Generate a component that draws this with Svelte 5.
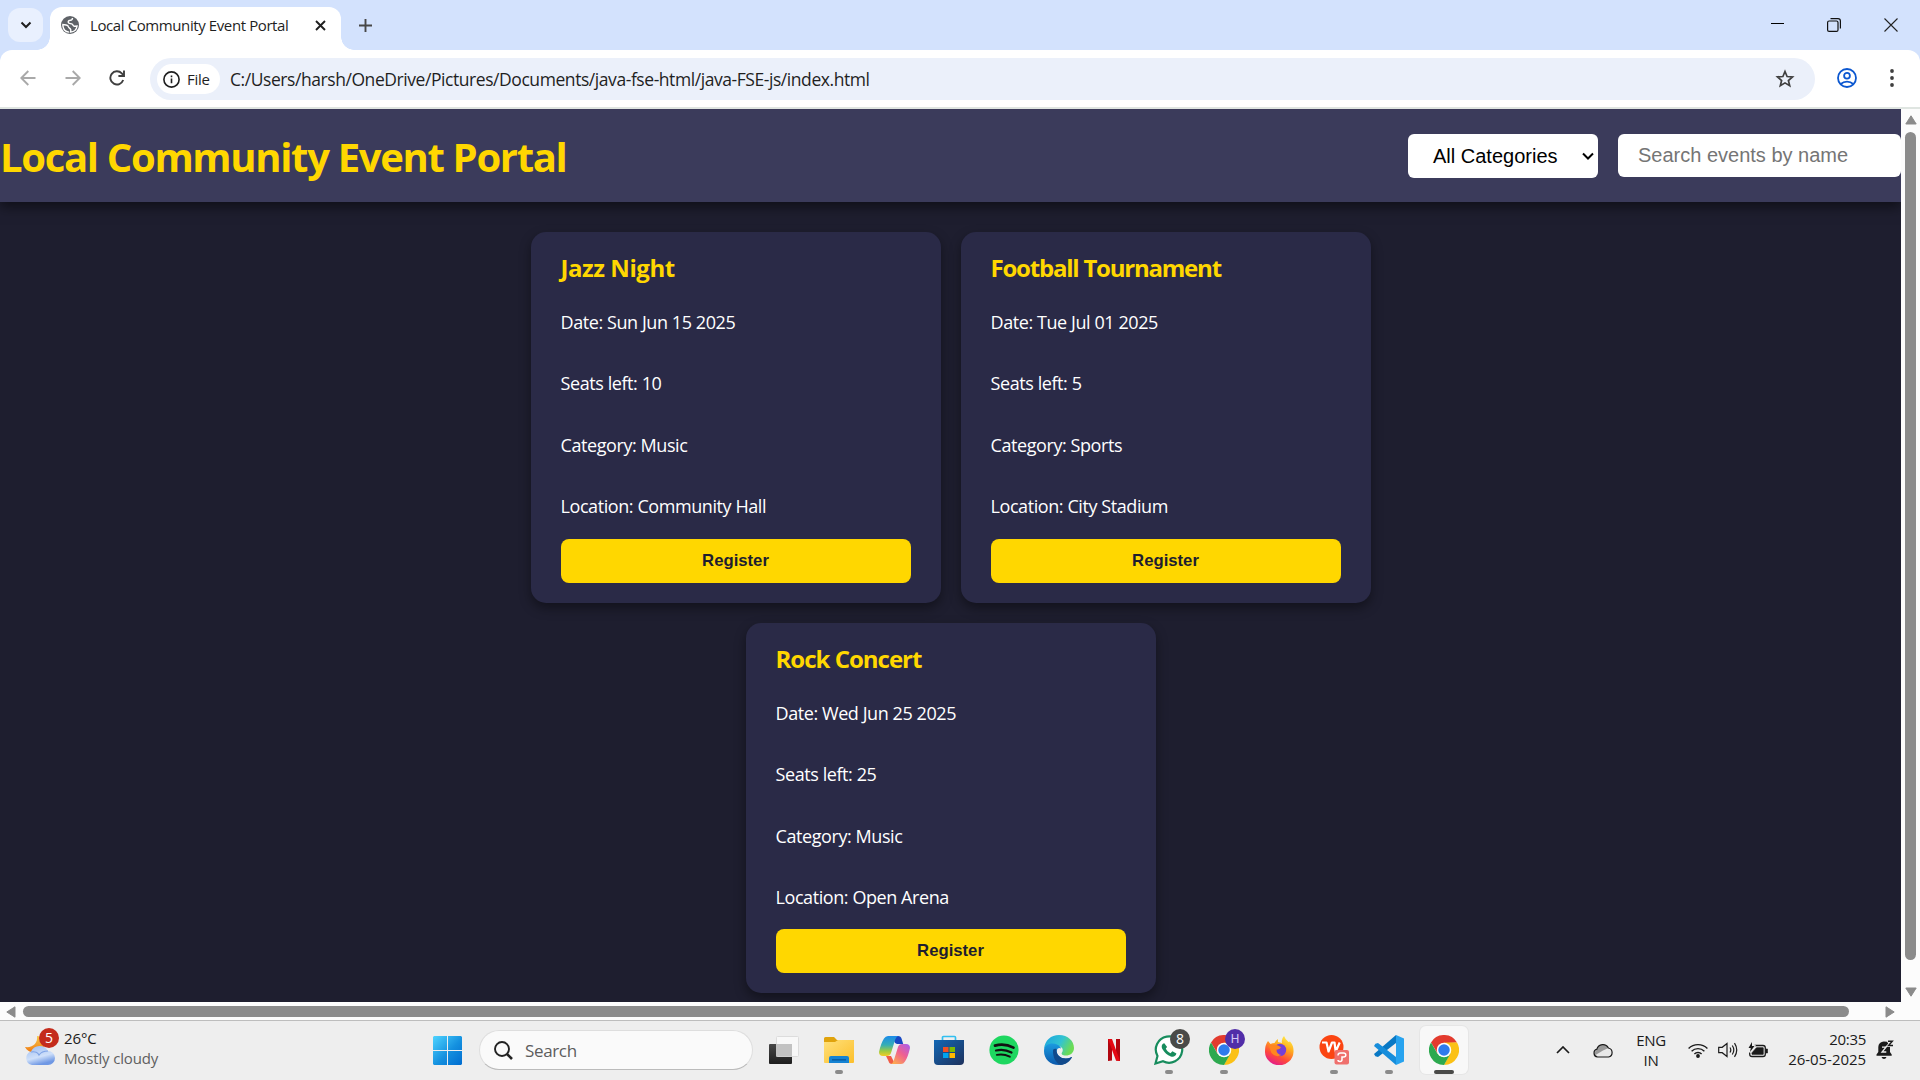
<script>
  const events = [
    { name: 'Jazz Night', date: 'Sun Jun 15 2025', seats: 10, category: 'Music', location: 'Community Hall', tracking: -0.45 },
    { name: 'Football Tournament', date: 'Tue Jul 01 2025', seats: 5, category: 'Sports', location: 'City Stadium', tracking: -1.22 },
    { name: 'Rock Concert', date: 'Wed Jun 25 2025', seats: 25, category: 'Music', location: 'Open Arena', tracking: -1.0 }
  ];
</script>

{#snippet chrome()}
  <svg width="30" height="30" viewBox="0 0 48 48">
    <path fill="#e33b2e" d="M3.2 12A24 24 0 0 1 44.8 12L24 13 14 30z" />
    <path fill="#fbc116" d="M44.8 12A24 24 0 0 1 24 48L33.5 29.5 24 12z" />
    <path fill="#2da94f" d="M3.2 12A24 24 0 0 0 24 48l10.4-18.3L24 35l-10.4-5z" />
    <circle cx="24" cy="24" r="11.6" fill="#fff" />
    <circle cx="24" cy="24" r="9.2" fill="#2f7bed" />
  </svg>
{/snippet}

<div class="screen">
  <div class="tabs">
    <button class="tab-search" aria-label="Search tabs">
      <svg width="12" height="8" viewBox="0 0 12 8"><path d="M1.5 1.5 6 6l4.500-4.500" fill="none" stroke="#1f1f1f" stroke-width="2" /></svg>
    </button>
    <div class="tab">
      <svg class="globe" width="18" height="18" viewBox="0 0 18 18">
        <circle cx="9" cy="9" r="9" fill="#5f6368" />
        <path d="M11.200 2c.2 1.600-.6 2-2 2.300-1.500.3-1.400 1-1.300 1.900.2 1.300 1.400 1.300 2.800 1.400 1.500.2 1.400 1.700 2.700 2l2.600.2c-.5 2.800-2.600 5.300-5.600 6l-2.600.1c0-1.200.7-1.400.6-2.500-.1-1.400-1.300-1.300-1.700-2.500-.4-1.300-1.300-1.700-2.700-1.900L1.900 8.700A7.200 7.200 0 0 1 6.500 2.300z" fill="none" />
        <path d="M11.500 1.900c0 1.700-.9 2.200-2.200 2.400-1.600.2-2.400 1-2 2.200.4 1.300 2 .9 3.400 1.300 1.400.5 1.200 2.200 2.700 2.500l2.700-.3a7.200 7.200 0 0 1-6.600 6.100c.3-1.400.7-2-.1-3.100-.7-1-1.700-1.100-2-2.300-.2-1-1-1.500-2.200-1.700L1.900 8.500v1.300A7.200 7.200 0 0 0 8 16.100" fill="none" stroke="#fff" stroke-width="1.400" />
      </svg>
      <span class="tab-title">Local Community Event Portal</span>
      <svg class="tab-close" width="11" height="11" viewBox="0 0 11 11"><path d="m1 1 9 9m0-9-9 9" stroke="#1f1f1f" stroke-width="1.900" /></svg>
    </div>
    <svg class="new-tab" width="13" height="13" viewBox="0 0 13 13"><path d="M6.500 0v13M0 6.500h13" stroke="#474747" stroke-width="1.900" /></svg>
    <div class="window-buttons">
      <svg width="13" height="13" viewBox="0 0 13 13"><path d="M0 5.500h13" stroke="#000" /></svg>
      <svg width="14" height="14" viewBox="0 0 14 14" fill="none" stroke="#111" stroke-width="1.200"><rect x=".6" y="3" width="10.400" height="10.400" rx="1.500" /><path d="M3.500.6h7.500a2.400 2.400 0 0 1 2.400 2.400v7.500" /></svg>
      <svg width="14" height="14" viewBox="0 0 14 14"><path d="m.5.5 13 13m0-13-13 13" stroke="#222" stroke-width="1.100" /></svg>
    </div>
  </div>

  <div class="toolbar">
    <div class="nav">
      <svg width="16" height="16" viewBox="0 0 16 16" fill="none" stroke="#a9a9a9" stroke-width="1.900"><path d="M15.500 8H1.500M8.300 1 1.300 8l7 7" /></svg>
      <svg width="16" height="16" viewBox="0 0 16 16" fill="none" stroke="#a9a9a9" stroke-width="1.900"><path d="M.5 8h14M7.700 1l7 7-7 7" /></svg>
      <svg width="16" height="16" viewBox="0 0 16 16" fill="none" stroke="#3f3f3f" stroke-width="1.900"><path d="M14.200 10A6.600 6.600 0 1 1 12.800 3.400L14.600 5.500M15 .4V6H9.400" /></svg>
    </div>
    <div class="omnibox">
      <div class="chip">
        <svg width="17" height="17" viewBox="0 0 17 17" fill="none" stroke="#1f1f1f" stroke-width="1.600"><circle cx="8.500" cy="8.500" r="7.600" /><path d="M8.500 7.600v4.700M8.500 4.500v1.700" /></svg>
        <span>File</span>
      </div>
      <span class="url">C:/Users/harsh/OneDrive/Pictures/Documents/java-fse-html/java-FSE-js/index.html</span>
      <svg class="star" width="20" height="20" viewBox="0 0 20 20"><path d="m10 2.500 2.100 5 5.400.4-4.100 3.600 1.300 5.300-4.700-2.900-4.700 2.900 1.300-5.300L2.500 7.900l5.400-.4z" fill="none" stroke="#3f3f3f" stroke-width="1.700" /></svg>
    </div>
    <svg class="profile" width="20" height="20" viewBox="0 0 20 20" fill="none" stroke="#0b57d0" stroke-width="1.800"><circle cx="10" cy="10" r="9" /><circle cx="10" cy="7.800" r="2.900" /><path d="M3.800 16c3.400-3.200 9-3.200 12.400 0" /></svg>
    <svg class="kebab" width="4" height="18" viewBox="0 0 4 18" fill="#3f3f3f"><circle cx="2" cy="2" r="1.900" /><circle cx="2" cy="9" r="1.900" /><circle cx="2" cy="16" r="1.900" /></svg>
  </div>

  <div class="viewport">
    <div class="page">
      <header>
        <h1>Local Community Event Portal</h1>
        <div class="filters">
          <div class="select">
            <span>All Categories</span>
            <svg width="12" height="8" viewBox="0 0 12 8"><path d="m1 1.500 5 5 5-5" fill="none" stroke="#000" stroke-width="2" /></svg>
          </div>
          <input type="text" placeholder="Search events by name" />
        </div>
      </header>
      <main>
        {#each events as event}
          <article>
            <h2 style:letter-spacing="{event.tracking}px">{event.name}</h2>
            <p>Date: {event.date}</p>
            <p>Seats left: {event.seats}</p>
            <p>Category: {event.category}</p>
            <p>Location: {event.location}</p>
            <button class="register">Register</button>
          </article>
        {/each}
      </main>
    </div>
    <div class="vscroll">
      <svg width="12" height="10" viewBox="0 0 12 10"><path d="M6 .8 11.200 9H.8z" fill="#8b8b8b" stroke="#8b8b8b" stroke-linejoin="round" /></svg>
      <div class="vthumb"></div>
      <svg width="12" height="10" viewBox="0 0 12 10"><path d="M6 9.200.8 1h10.400z" fill="#8b8b8b" stroke="#8b8b8b" stroke-linejoin="round" /></svg>
    </div>
  </div>

  <div class="hscroll">
    <svg width="10" height="12" viewBox="0 0 10 12"><path d="M.8 6 9 .8v10.400z" fill="#8b8b8b" stroke="#8b8b8b" stroke-linejoin="round" /></svg>
    <div class="hthumb"></div>
    <svg width="10" height="12" viewBox="0 0 10 12"><path d="M9.200 6 1 .8v10.400z" fill="#8b8b8b" stroke="#8b8b8b" stroke-linejoin="round" /></svg>
  </div>

  <footer>
    <div class="weather">
      <div class="weather-icon">
        <svg width="30" height="36" viewBox="0 0 30 36">
          <defs>
            <linearGradient id="moon" x2="0" y2="1"><stop stop-color="#f7c84a" /><stop offset="1" stop-color="#f07a12" /></linearGradient>
            <linearGradient id="cloud" x2=".4" y2="1"><stop stop-color="#9dbcf0" /><stop offset=".65" stop-color="#cfe0fa" /><stop offset="1" stop-color="#6f98e4" /></linearGradient>
          </defs>
          <path d="M12 7c1 7-4 12-12 11 2 4 6 6 10 5l9-5V8z" fill="url(#moon)" />
          <path d="M7 36a7 7 0 0 1-1-13.500 9.500 9.500 0 0 1 17-.5A7 7 0 0 1 23 36z" fill="url(#cloud)" />
          <path d="M6 23c4-1 7 1 8 3 2-3 5-4 9-4" fill="none" stroke="#7fa3e6" stroke-width="1.200" />
        </svg>
        <span class="badge red">5</span>
      </div>
      <div class="weather-text"><span>26°C</span><span class="muted">Mostly cloudy</span></div>
    </div>

    <svg class="start" width="29" height="29" viewBox="0 0 29 29">
      <defs><linearGradient id="win" x2="1" y2="1"><stop stop-color="#4fd4ff" /><stop offset=".55" stop-color="#1490df" /><stop offset="1" stop-color="#006cd0" /></linearGradient></defs>
      <path d="M1 0h13v14H0V1zM15 0h13l1 1v13H15zM0 15h14v14H1l-1-1zM15 15h14v13l-1 1H15z" fill="url(#win)" />
    </svg>
    <div class="search">
      <svg width="19" height="19" viewBox="0 0 19 19" fill="none" stroke="#222"><circle cx="8" cy="8" r="7" stroke-width="1.900" /><path d="m13 13 5 5" stroke-width="2.600" /></svg>
      <span>Search</span>
    </div>

    <div class="apps">
      <div class="app">
        <svg width="30" height="28" viewBox="0 0 30 28"><defs><linearGradient id="tv" x2="0" y2="1"><stop stop-color="#474747" /><stop offset="1" stop-color="#1d1d1d" /></linearGradient></defs><rect y="8" width="23" height="20" rx="1" fill="url(#tv)" /><rect x="7.500" y=".5" width="22" height="20" rx="1" fill="#f8f8f8" stroke="#dcdcdc" /><rect x="7" y="8" width="16" height="12.500" fill="#c2c2c2" /></svg>
      </div>
      <div class="app running">
        <svg width="30" height="28" viewBox="0 0 30 28"><defs><linearGradient id="fold" x2="1" y2="1"><stop stop-color="#ffe07a" /><stop offset="1" stop-color="#fcbf2b" /></linearGradient></defs><path d="M0 2.500Q0 1 1.500 1H10l3 3h16q1 0 1 1v8H0z" fill="#e0a30c" /><path d="M0 6h11l3-2h15q1 0 1 1v21q0 1-1 1H1q-1 0-1-1z" fill="url(#fold)" /><path d="M5 27v-5q0-2 2-2h16q2 0 2 2v5z" fill="#1683d3" /><path d="M8 23.800h14" stroke="#0a5ca3" stroke-width="1.500" /></svg>
      </div>
      <div class="app">
        <svg width="31" height="28" viewBox="0 0 31 28">
          <defs>
            <linearGradient id="c1" x2="0" y2="1"><stop stop-color="#1b8bea" /><stop offset=".45" stop-color="#35aeb5" /><stop offset=".75" stop-color="#9ccb42" /><stop offset="1" stop-color="#f3cd26" /></linearGradient>
            <linearGradient id="c2" x1="1" x2=".2" y2="1"><stop stop-color="#a45df3" /><stop offset=".5" stop-color="#ef5f91" /><stop offset="1" stop-color="#fdaa50" /></linearGradient>
          </defs>
          <path d="M15 0h4q3 0 3.700 3l1.500 5H18q-2 0-3-3z" fill="#1748c4" />
          <path d="M9 0h10q-2 1-2.800 3.500L12 17q-1 3-4 3H4q-4 0-4-4Q2 7 5 2.500 6.500 0 9 0z" fill="url(#c1)" />
          <path d="M7 20h5l4 8h-3q-3 0-3.500-3z" fill="#f05b45" />
          <path d="M22 28H12q2-1 2.800-3.500L19 11q1-3 4-3h4q4 0 4 4-2 9-5 13.500-1.500 2.500-4 2.500z" fill="url(#c2)" />
        </svg>
      </div>
      <div class="app">
        <svg width="30" height="30" viewBox="0 0 30 30"><defs><linearGradient id="st" x2="1" y2="1"><stop stop-color="#1267b5" /><stop offset="1" stop-color="#1e315c" /></linearGradient></defs><path d="M8.500 6V2.500q0-1 1-1h11q1 0 1 1V6" fill="none" stroke="#31bff0" stroke-width="1.700" /><path d="M0 5h30v21q0 4-4 4H4q-4 0-4-4z" fill="url(#st)" /><path fill="#f25022" d="M9 12h5.500v5H9z" /><path fill="#7fba00" d="M15.500 12H21v5h-5.500z" /><path fill="#00a4ef" d="M9 18h5.500v5H9z" /><path fill="#ffb900" d="M15.500 18H21v5h-5.500z" /></svg>
      </div>
      <div class="app">
        <svg width="30" height="30" viewBox="0 0 30 30"><circle cx="15" cy="15" r="14.600" fill="#1ed760" /><g fill="none" stroke="#111" stroke-linecap="round"><path d="M6 10.600q9.500-2.600 18.500 2" stroke-width="2.700" /><path d="M7 15.500q8-2 15.500 2" stroke-width="2.200" /><path d="M7.800 19.900q6.700-1.500 13 1.800" stroke-width="1.900" /></g></svg>
      </div>
      <div class="app">
        <svg width="30" height="30" viewBox="0 0 30 30">
          <defs><linearGradient id="e1" x2="1" y2=".4"><stop stop-color="#1aa3df" /><stop offset=".6" stop-color="#32c3d2" /><stop offset="1" stop-color="#6bdc55" /></linearGradient><linearGradient id="e2" x2="0" y2="1"><stop stop-color="#1b9be0" /><stop offset="1" stop-color="#0b58ab" /></linearGradient></defs>
          <path d="M0 14C1 5 7 0 15 0c9 0 15 6 15 13 0 5-4 7.500-8 7.500-4 0-5-1.500-4-3 2-3 0-6-4-6.500C8 10 2 11 0 14z" fill="url(#e1)" />
          <path d="M0 16C0 9 8 7 13 9.500c3 1.500 4 3 4 4-3-2-6 2-3 6.500 3 4 9 4.500 13.500 2C25 27 20 30 15 30 6 30 0 24 0 16z" fill="url(#e2)" />
          <path d="M9 16c0 6 2 11 7.500 14 5-.3 9-3 11.500-7.500-.3-.6-.8-.4-1.300-.1C20 25.500 12 22 12.500 14 10.500 13.500 9 14 9 16z" fill="#114a8b" />
        </svg>
      </div>
      <div class="app netflix">
        <svg width="12" height="22" viewBox="0 0 12 22"><path d="M0 0h4v21.600L0 22zM8 0h4v22l-4-.4z" fill="#b1060f" /><path d="M0 0h4l8 22-4-.4z" fill="#e50914" /></svg>
      </div>
      <div class="app running">
        <svg width="30" height="30" viewBox="0 0 30 30"><path d="M1.500 28.500l2-7.500A13.200 13.200 0 1 1 9 26.300z" fill="#fff" stroke="#178c5d" stroke-width="2.200" /><path d="M10.300 8.200c-2.600.6-3.400 3.500-1.600 6.200 2 3.300 4.500 5.800 8.200 7 2.600.9 5.300-.5 5.500-2.900l-4-2.200-1.900 1.900c-2.300-1-3.800-2.600-4.700-4.600l1.300-1.700z" fill="#178c5d" /></svg>
        <span class="badge dark">8</span>
      </div>
      <div class="app running">
        {@render chrome()}
        <span class="badge purple">H</span>
      </div>
      <div class="app">
        <svg width="29" height="29" viewBox="0 0 29 29">
          <defs><linearGradient id="ff" x1=".8" x2=".3" y2="1"><stop stop-color="#fff04a" /><stop offset=".35" stop-color="#ffae1e" /><stop offset=".7" stop-color="#ff4b38" /><stop offset="1" stop-color="#e2198f" /></linearGradient></defs>
          <path d="M3 5l2.500 3q2-1 4-1Q11 4 13 3v3l4 1q-1-4 2-7 1 3 4.500 6l1.500-.500Q29 10 28.500 16A14 13.500 0 0 1 0 15Q0 9 3 5z" fill="url(#ff)" />
          <circle cx="15" cy="14" r="6.200" fill="#7540d8" />
          <path d="M4 10q5-3 10 0l2 1.500q-1 2-4.500 2.200 0 4.500 5 5.300-6 3-10-2z" fill="#ff861f" />
        </svg>
      </div>
      <div class="app running">
        <svg width="31" height="30" viewBox="0 0 31 30"><circle cx="12.500" cy="12" r="12" fill="#fb4512" /><path d="M3 7.500h4.500l2 9 3.500-9h2.500l1.200 9 4-9" fill="none" stroke="#fff" stroke-width="2.200" stroke-linejoin="round" /><rect x="15.500" y="15" width="14.500" height="14.500" rx="2" fill="#ef706d" /><path d="M19 20.500q0-2.500 2.500-2.500h3q2.300 0 2.300 2t-2.300 2H23v2.500q0 2-2 2t-2-1.500" fill="none" stroke="#fff" stroke-width="1.500" /></svg>
      </div>
      <div class="app running">
        <svg width="30" height="30" viewBox="0 0 30 30"><path d="M22 0 30 3.500v23L22 30z" fill="#27a3ef" /><path d="M22 0v8L4 22l-2.600-.8L0 19z" fill="#0878c4" /><path d="M22 30v-8L4 8l-2.600.8L0 11z" fill="#168ddb" /></svg>
      </div>
      <div class="app active">{@render chrome()}</div>
    </div>

    <div class="tray">
      <svg width="14" height="8" viewBox="0 0 14 8"><path d="m1 7 6-6 6 6" fill="none" stroke="#1b1b1b" stroke-width="1.700" /></svg>
      <svg width="20" height="15" viewBox="0 0 20 15"><path d="M4.500 14a4 4 0 0 1-.6-7.800A6.200 6.200 0 0 1 15.400 5 4.600 4.600 0 0 1 15.500 14z" fill="#e9e9e9" /><path d="M4 6.200A6.200 6.200 0 0 1 15.400 5L10 7.500 2.500 12 1 10z" fill="#999" /><path d="M4.500 14a4 4 0 0 1-.6-7.800A6.200 6.200 0 0 1 15.400 5 4.600 4.600 0 0 1 15.500 14z" fill="none" stroke="#1b1b1b" stroke-width="1.200" /></svg>
      <div class="lang"><span>ENG</span><span>IN</span></div>
      <svg width="20" height="15" viewBox="0 0 20 15" fill="none" stroke="#1b1b1b" stroke-width="1.400"><path d="M.6 5.600a13.200 13.200 0 0 1 18.800 0M3.600 8.300a9 9 0 0 1 12.800 0M6.400 11a5 5 0 0 1 7.200 0" /><circle cx="10" cy="13" r="1.200" fill="#1b1b1b" /></svg>
      <svg width="20" height="16" viewBox="0 0 20 16" fill="none" stroke="#1b1b1b" stroke-width="1.200"><path d="M.7 5.300h3.500L9 1.500v13l-4.800-3.800H.7zM12 5.500q1.600 2.500 0 5M14.300 3.500q3 4.500 0 9M16.500 1.200q4.500 6.800 0 13.600" /></svg>
      <svg width="20" height="16" viewBox="0 0 20 16"><path d="M6.500 3.500H15q2.300 0 2.300 2.300v6.400q0 2.300-2.300 2.300H4q-2.300 0-2.300-2.300V10.500" fill="none" stroke="#1b1b1b" stroke-width="1.300" /><path d="M8.500 5.800h6.700v6.500H4v-1.500z" fill="#1b1b1b" stroke="#1b1b1b" stroke-width=".8" stroke-linejoin="round" /><path d="M18 7h1.500v4H18z" fill="#1b1b1b" stroke="#1b1b1b" stroke-width=".6" /><path d="M4 0 .5 6h2.300L2 10l4.500-6H4z" fill="#1b1b1b" stroke="#eee" stroke-width="1.600" paint-order="stroke" /></svg>
      <div class="clock"><span>20:35</span><span class="date">26-05-2025</span></div>
      <svg class="bell" width="18" height="20" viewBox="0 0 18 20"><path d="M8 1.500a5.500 5.500 0 0 0-5.700 5.500v5L.5 14.500v1.300h15.200v-1.300L14 12V6L11 1.800z" fill="#1b1b1b" /><path d="M5.500 17h5q-.6 2-2.500 2t-2.500-2z" fill="#1b1b1b" /><path d="M6 7.200h4l-4 4.800h4.300" fill="none" stroke="#eee" stroke-width="1.300" /><path d="M12 1.200h4.300L12.500 5.500H17" fill="none" stroke="#eee" stroke-width="3" /><path d="M12 1.200h4.300L12.500 5.500H17" fill="none" stroke="#1b1b1b" stroke-width="1.400" /></svg>
    </div>
  </footer>
</div>

<style>
  :global(body) { margin: 0; overflow: hidden; }
  .screen { width: 1920px; height: 1080px; display: flex; flex-direction: column; font-family: "Open Sans", "Noto Sans", sans-serif; color: #1f1f1f; white-space: nowrap; overflow: hidden; background: #d3e2fd; }
  .screen :global(*) { box-sizing: border-box; }
  svg { display: block; flex: none; }
  button { border: 0; padding: 0; }

  .tabs { height: 50px; flex: none; background: #d3e2fd; display: flex; align-items: flex-start; padding: 7px 17px 0 8px; }
  .tab-search { width: 35px; height: 34px; margin-top: 1px; border-radius: 12px; background: #e9f0fe; display: grid; place-items: center; }
  .tab { position: relative; width: 291px; height: 43px; margin-left: 7px; background: #fff; border-radius: 12px 12px 0 0; display: flex; align-items: center; padding: 0 15px 7px 11px; }
  .tab::before, .tab::after { content: ""; position: absolute; bottom: 0; width: 13px; height: 13px; }
  .tab::before { left: -13px; background: radial-gradient(circle at 0 0, transparent 12.500px, #fff 13px); }
  .tab::after { right: -13px; background: radial-gradient(circle at 100% 0, transparent 12.500px, #fff 13px); }
  .tab-title { margin-left: 11px; font-size: 15px; letter-spacing: -.4px; }
  .tab-close { margin-left: auto; }
  .new-tab { margin: 12px 0 0 18px; }
  .window-buttons { margin: 11px 0 0 auto; display: flex; gap: 43px; padding-right: 5px; }

  .toolbar { height: 59px; flex: none; display: flex; align-items: center; padding: 0 26px 1px 0; background: #fff; border-bottom: 2px solid #dfe5e1; border-radius: 12px 12px 0 0; }
  .nav { width: 150px; flex: none; display: flex; gap: 28.500px; padding-left: 20px; }
  .omnibox { width: 1665px; height: 42px; flex: none; margin-top: 2px; border-radius: 21px; background: #ebf0fa; display: flex; align-items: center; padding: 0 20px 0 7px; }
  .chip { width: 63px; height: 30px; border-radius: 15px; background: #fff; display: flex; align-items: center; gap: 7px; padding-left: 6px; font-size: 15px; font-weight: 500; letter-spacing: -.3px; }
  .url { margin-left: 10px; font-size: 17.500px; letter-spacing: -.435px; }
  .star { margin-left: auto; }
  .profile { margin-left: 22px; }
  .kebab { margin-left: auto; }

  .viewport { height: 893px; flex: none; display: flex; }
  .page { width: 1901px; background: #1e1e2f; overflow: hidden; }
  header { height: 93px; background: #3b3b5b; display: flex; align-items: center; justify-content: space-between; box-shadow: 0 5px 12px rgba(0, 0, 0, .5); }
  h1 { margin: 2px 0 0; color: #ffd700; font-size: 40px; line-height: 54px; font-weight: 700; letter-spacing: -1.320px; }
  .filters { display: flex; gap: 20px; align-items: flex-start; font: 20px "Liberation Sans", Arial, sans-serif; }
  .select { width: 190px; height: 44px; border-radius: 6px; background: #fff; color: #000; display: flex; align-items: center; justify-content: space-between; padding: 1px 4px 0 25px; }
  input { width: 283px; height: 43px; border: 0; border-radius: 6px; padding: 0 20px; font: 20px "Liberation Sans", Arial, sans-serif; background: #fff; }
  input::placeholder { color: #757575; }
  main { width: 900px; margin: 30px auto 0; display: flex; flex-wrap: wrap; justify-content: center; gap: 20px; }
  article { display: flex; flex-direction: column; width: 410px; height: 371px; padding: 20px 30px; border-radius: 15px; background: #2a2a47; box-shadow: 0 5px 12px rgba(0, 0, 0, .4); color: #fff; }
  article:nth-child(3) { height: 370px; }
  h2 { margin: -1px 0 0; color: #ffd700; font-size: 24px; line-height: 34px; }
  p { margin: 0; font-size: 18px; line-height: 25px; letter-spacing: -.42px; }
  h2 + p { margin-top: 25px; }
  p + p { margin-top: 36.300px; }
  .register { flex: none; width: 350px; height: 44px; margin-top: auto; border-radius: 8px; background: #ffd700; color: #1e1e2f; font: bold 16.700px "Liberation Sans", Arial, sans-serif; }
  .vscroll { width: 19px; background: #fcfcfc; display: flex; flex-direction: column; align-items: center; padding: 6px 0 5px; }
  .vthumb { width: 11px; height: 828px; margin: 7px 0 auto; border-radius: 6px; background: #8b8b8b; }
  .hscroll { height: 18px; flex: none; background: #fcfcfc; display: flex; align-items: center; padding: 1px 25px 0 6px; }
  .hthumb { width: 1826px; height: 11px; margin: 0 auto 0 7px; border-radius: 6px; background: #8b8b8b; }

  footer { height: 60px; flex: none; background: #eee; border-top: 1px solid #bdbdbd; display: flex; align-items: center; padding-bottom: 1px; color: #1b1b1b; font-size: 15px; letter-spacing: -.3px; }
  .weather { width: 433px; display: flex; gap: 9px; padding-left: 25px; margin-top: -3px; }
  .weather-icon { position: relative; }
  .weather-text { display: flex; flex-direction: column; line-height: 20px; margin-top: -1px; letter-spacing: -.1px; }
  .muted { color: #5f5f5f; letter-spacing: -.15px; }
  .badge { position: absolute; width: 20px; height: 20px; border-radius: 50%; display: grid; place-items: center; color: #fff; font-size: 14px; line-height: 20px; letter-spacing: 0; }
  .red { right: -4px; top: -1px; background: #c42b1c; }
  .dark { background: #4a4a48; }
  .purple { background: #512da8; color: #d6c8f5; font: 12px Roboto, sans-serif; }
  .search { width: 274px; height: 40px; margin-left: 17px; border: 1px solid #dedede; border-bottom-color: #bbb; border-radius: 20px; background: #fafafa; display: flex; align-items: center; gap: 12px; padding-left: 14px; color: #5d5d5d; font-size: 17px; letter-spacing: -.35px; }
  .apps { display: flex; margin-left: 3.500px; }
  .app { position: relative; width: 55px; height: 48px; display: grid; place-items: center; }
  .running::after, .active::after { content: ""; position: absolute; left: 23.500px; bottom: 0; width: 8px; height: 4px; border-radius: 2px; background: #8a8a8a; }
  .running .badge { right: 6.500px; top: 3px; }
  .active { width: 48px; margin-left: 3px; background: #f8f8f8; border-radius: 6px; box-shadow: 0 0 0 1px #e6e6e6; }
  .active::after { left: 14px; width: 20px; background: #4a4a48; }
  .tray { margin-left: auto; display: grid; grid-template-columns: 46px 34px 62px 31px 30px 30px 93px 37px 17px; align-items: center; justify-items: center; }
  .lang, .clock { display: flex; flex-direction: column; line-height: 20px; margin-top: -1px; }
  .lang { align-items: center; }
  .clock { justify-self: end; align-items: flex-end; margin-top: -3px; }
  .date { letter-spacing: -.05px; }
</style>
